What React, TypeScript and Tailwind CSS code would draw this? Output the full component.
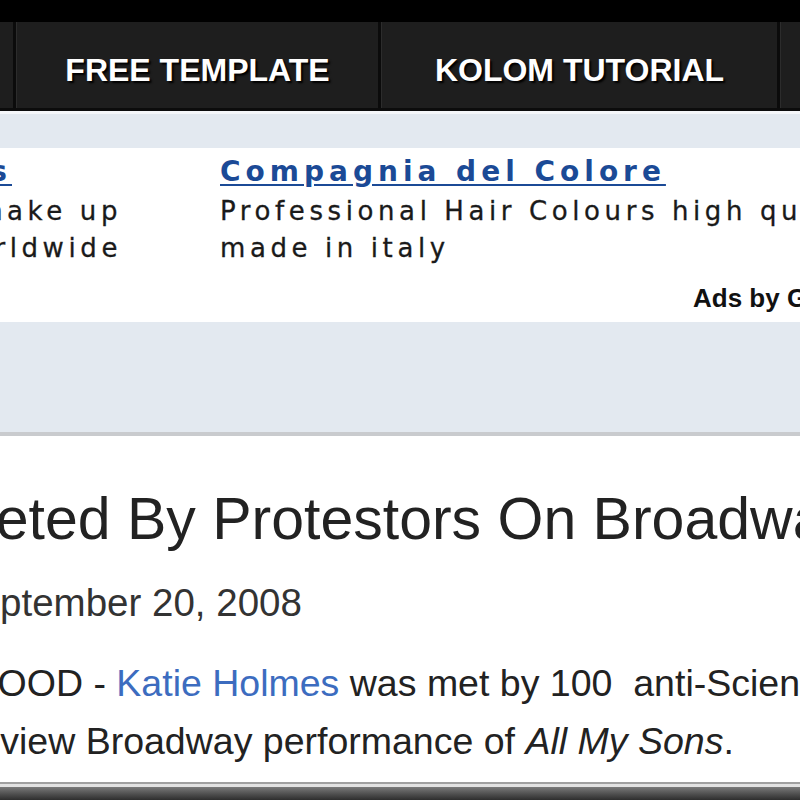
import React from 'react';

const navItems = ['FREE TEMPLATE', 'KOLOM TUTORIAL'];

function NavSep() {
  return <div className="w-[4px] shrink-0 bg-[#0b0b0b] border-r border-[#2c2c2c]" />;
}

export default function App() {
  return (
    <div className="w-[800px] h-[800px] overflow-hidden bg-white flex flex-col">
      <div className="h-[22px] shrink-0 bg-black" />

      {/* menu */}
      <nav className="h-[86px] shrink-0 bg-[#1e1e1e] flex font-['Liberation_Sans',Arial,sans-serif] font-bold text-white text-[32px] leading-[40px]">
        <div className="w-[13px] shrink-0" />
        <NavSep />
        <div className="w-[361px] shrink-0 flex justify-center pt-[28px] [text-shadow:2px_2px_2px_#000]">{navItems[0]}</div>
        <NavSep />
        <div className="w-[395px] shrink-0 flex justify-center pt-[28px] [text-shadow:2px_2px_2px_#000]">{navItems[1]}</div>
        <NavSep />
      </nav>
      <div className="h-[3px] shrink-0 bg-[#0c0c0c]" />
      <div className="h-[3px] shrink-0 bg-[#f5f7fa]" />
      <div className="h-[34px] shrink-0 bg-[#e3e9f0]" />

      {/* ad unit */}
      <div className="h-[174px] shrink-0 bg-white pt-[7px] font-['DejaVu_Sans',Verdana,sans-serif] whitespace-nowrap">
        <div className="flex gap-[98px]">
          <div className="w-[122px] shrink-0">
            <div className="flex justify-end pr-[110px] text-[28px] leading-[34px] font-bold tracking-[5px] text-[#1b4a96] underline underline-offset-[3px]">
              <span>Cosmetics</span>
            </div>
            <div className="mt-[4px] text-[26px] leading-[37px] tracking-[4.6px] text-[#1a1a1a] [-webkit-text-stroke:0.3px_#1a1a1a]">
              <div className="flex justify-end"><span>Professional make up</span></div>
              <div className="flex justify-end"><span>shipped worldwide</span></div>
            </div>
          </div>
          <div className="shrink-0">
            <div className="text-[28px] leading-[34px] font-bold tracking-[5px] text-[#1b4a96] underline underline-offset-[3px]">Compagnia del Colore</div>
            <div className="mt-[4px] text-[26px] leading-[37px] tracking-[4.6px] text-[#1a1a1a] [-webkit-text-stroke:0.3px_#1a1a1a]">
              <div>Professional Hair Colours high quality</div>
              <div>made in italy</div>
            </div>
          </div>
        </div>
        <div className="mt-[16px] ml-[693px] font-['Liberation_Sans',Arial,sans-serif] font-bold text-[26px] leading-[30px] text-[#111]">Ads by Google</div>
      </div>

      <div className="h-[110px] shrink-0 bg-[#e3e9f0]" />
      <div className="h-[4px] shrink-0 bg-[#c9cbce]" />

      {/* post */}
      <div className="h-[346px] shrink-0 bg-white font-['Liberation_Sans',Arial,sans-serif] whitespace-nowrap text-[#222]">
        <h1 className="mt-[50px] -ml-[119px] text-[59px] leading-[66px] font-normal">Targeted By Protestors On Broadway</h1>
        <div className="mt-[30px] -ml-[47px] text-[38.5px] leading-[42px] text-[#333]">September 20, 2008</div>
        <div className="mt-[30px] text-[37.5px] leading-[58px]">
          <div className="-ml-[158px]">
            HOLLYWOOD - <a className="text-[#3c6cbf]">Katie Holmes</a> was met by 100{'\u00a0'} anti-Scientology protestors
          </div>
          <div className="-ml-[54px]">
            preview Broadway performance of <i>All My Sons</i>.
          </div>
        </div>
      </div>

      {/* frame edge */}
      <div className="h-[2px] shrink-0 bg-[#a0a0a0]" />
      <div className="h-[3px] shrink-0 bg-[#e2e2e2]" />
      <div className="h-[13px] shrink-0 bg-gradient-to-b from-[#7a7a7a] to-[#2e2e2e]" />
    </div>
  );
}
